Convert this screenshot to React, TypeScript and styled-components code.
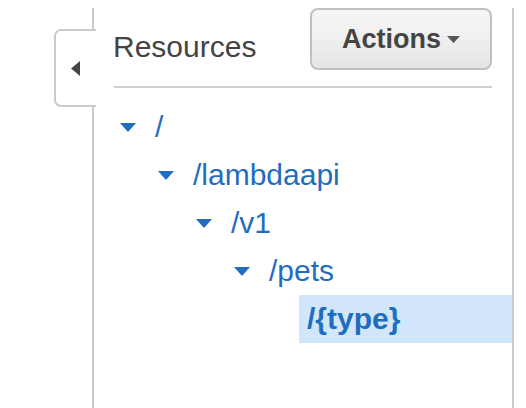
import React from "react";
import styled, { createGlobalStyle } from "styled-components";

const GlobalStyle = createGlobalStyle`
  html, body {
    margin: 0;
    padding: 0;
    background: #ffffff;
    overflow: hidden;
  }
  body {
    font-family: "Liberation Sans", Arial, Helvetica, sans-serif;
  }
`;

const Page = styled.div`
  display: flex;
  padding: 8px 0 0 92px;
  height: 408px;
  box-sizing: border-box;
`;

const Panel = styled.section`
  position: relative;
  box-sizing: border-box;
  width: 422px;
  height: 100%;
  border-left: 2px solid #c9cacc;
  border-right: 2px solid #c9cacc;
  display: flex;
  flex-direction: column;
`;

const CollapseTab = styled.button`
  position: absolute;
  left: -40px;
  top: 21px;
  width: 42px;
  height: 78px;
  box-sizing: border-box;
  padding: 0 0 0 15px;
  background: #ffffff;
  border: 2px solid #c9cacc;
  border-right: none;
  border-radius: 7px 0 0 7px;
  display: flex;
  align-items: center;
  cursor: pointer;
`;

const Header = styled.header`
  display: flex;
  justify-content: space-between;
  align-items: flex-start;
  margin: 0 20px 0 20px;
  height: 80px;
  box-sizing: border-box;
  border-bottom: 2px solid #cfd0d2;
`;

const Title = styled.h2`
  margin: 24px 0 0 -1px;
  font-size: 30px;
  line-height: 30px;
  font-weight: 400;
  color: #444444;
`;

const ActionsButton = styled.button`
  width: 182px;
  height: 62px;
  box-sizing: border-box;
  border: 2px solid #c3c0bb;
  border-radius: 8px;
  background: linear-gradient(#f6f6f6 0%, #efefef 50%, #e5e5e5 100%);
  display: flex;
  align-items: center;
  justify-content: center;
  gap: 6px;
  padding: 0;
  font-family: "Liberation Sans", Arial, Helvetica, sans-serif;
  font-size: 27px;
  font-weight: 700;
  color: #444444;
  cursor: pointer;
`;

const Tree = styled.ul`
  list-style: none;
  margin: 15px 0 0 0;
  padding: 0;
`;

const Row = styled.li<{ $level: number }>`
  display: flex;
  align-items: center;
  height: 48px;
  padding-left: ${(p) => 26 + p.$level * 38}px;
`;

const Caret = styled.span`
  display: flex;
  width: 16px;
  height: 9px;
  margin-right: 11px;
  flex: none;
`;

const Spacer = styled.span`
  width: 27px;
  flex: none;
`;

const Label = styled.span<{ $selected?: boolean }>`
  flex: 1;
  display: flex;
  align-items: center;
  height: 100%;
  padding-left: 8px;
  font-size: 30px;
  line-height: 48px;
  color: #1f6dbf;
  font-weight: ${(p) => (p.$selected ? 700 : 400)};
  background: ${(p) => (p.$selected ? "#d1e6fb" : "transparent")};
`;

const DownTriangle = ({ color }: { color: string }) => (
  <svg width="16" height="9" viewBox="0 0 16 9">
    <polygon points="0,0 16,0 8,9" fill={color} />
  </svg>
);

type Node = { label: string; level: number; expanded?: boolean; selected?: boolean };

const nodes: Node[] = [
  { label: "/", level: 0, expanded: true },
  { label: "/lambdaapi", level: 1, expanded: true },
  { label: "/v1", level: 2, expanded: true },
  { label: "/pets", level: 3, expanded: true },
  { label: "/{type}", level: 4, selected: true },
];

export default function App() {
  return (
    <>
      <GlobalStyle />
      <Page>
        <Panel>
          <CollapseTab aria-label="Collapse">
            <svg width="9" height="15" viewBox="0 0 9 15">
              <polygon points="9,0 9,15 0,7.5" fill="#444444" />
            </svg>
          </CollapseTab>
          <Header>
            <Title>Resources</Title>
            <ActionsButton>
              Actions
              <svg width="13" height="7" viewBox="0 0 13 7">
                <polygon points="0,0 13,0 6.5,7" fill="#555555" />
              </svg>
            </ActionsButton>
          </Header>
          <Tree>
            {nodes.map((n) => (
              <Row key={n.label} $level={n.level}>
                {n.expanded ? (
                  <Caret>
                    <DownTriangle color="#1f6dbf" />
                  </Caret>
                ) : (
                  <Spacer />
                )}
                <Label $selected={n.selected}>{n.label}</Label>
              </Row>
            ))}
          </Tree>
        </Panel>
      </Page>
    </>
  );
}
